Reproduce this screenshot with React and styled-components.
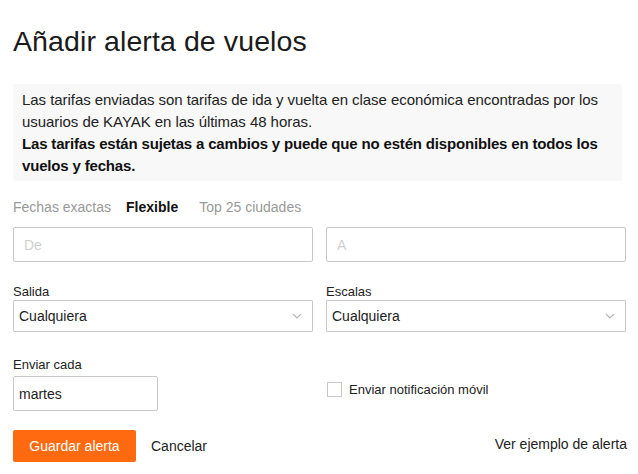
import React, { useState } from "react";
import styled, { createGlobalStyle } from "styled-components";

const GlobalStyle = createGlobalStyle`
  body {
    margin: 0;
    background: #fff;
    font-family: "Liberation Sans", Arial, Helvetica, sans-serif;
    color: #222;
  }
  * {
    box-sizing: border-box;
  }
`;

const Chevron = () => (
  <svg width="10" height="6" viewBox="0 0 10 6">
    <polyline points="1,1 5,5 9,1" fill="none" stroke="#b5b5b5" strokeWidth="1.1" />
  </svg>
);

const App = () => {
  const [tab, setTab] = useState("Flexible");
  const [mobile, setMobile] = useState(false);
  const tabs = ["Fechas exactas", "Flexible", "Top 25 ciudades"];

  return (
    <Container>
      <GlobalStyle />
      <Title>Añadir alerta de vuelos</Title>
      <InfoBox>
        <p>
          Las tarifas enviadas son tarifas de ida y vuelta en clase económica encontradas por los
          <br />
          usuarios de KAYAK en las últimas 48 horas.
        </p>
        <p className="strong">
          Las tarifas están sujetas a cambios y puede que no estén disponibles en todos los
          <br />
          vuelos y fechas.
        </p>
      </InfoBox>
      <Tabs>
        {tabs.map((t) => (
          <Tab key={t} $active={tab === t} onClick={() => setTab(t)}>
            {t}
          </Tab>
        ))}
      </Tabs>
      <Row>
        <TextInput placeholder="De" />
        <TextInput placeholder="A" />
      </Row>
      <Row $top={22}>
        <Field>
          <Label>Salida</Label>
          <SelectBox>
            <span>Cualquiera</span>
            <Chevron />
          </SelectBox>
        </Field>
        <Field>
          <Label>Escalas</Label>
          <SelectBox>
            <span>Cualquiera</span>
            <Chevron />
          </SelectBox>
        </Field>
      </Row>
      <Row $top={25}>
        <Field>
          <Label $gap={3}>Enviar cada</Label>
          <DayInput defaultValue="martes" />
        </Field>
        <CheckRow onClick={() => setMobile((prev) => !prev)}>
          <CheckBox $checked={mobile} />
          <span>Enviar notificación móvil</span>
        </CheckRow>
      </Row>
      <Actions>
        <SaveButton>Guardar alerta</SaveButton>
        <CancelLink>Cancelar</CancelLink>
        <ExampleLink>Ver ejemplo de alerta</ExampleLink>
      </Actions>
    </Container>
  );
};

export default App;

const Container = styled.div`
  width: 638px;
  padding: 24px 13px 0 13px;
`;

const Title = styled.h1`
  margin: 0;
  font-size: 28.5px;
  line-height: 34px;
  font-weight: 400;
  color: #1b1b1b;
  letter-spacing: 0.1px;
`;

const InfoBox = styled.div`
  margin-top: 26px;
  width: 609px;
  background: #f8f8f8;
  border-radius: 2px;
  padding: 5px 9px 4px 9px;

  p {
    margin: 0;
    font-size: 15px;
    line-height: 22px;
    letter-spacing: -0.05px;
    white-space: nowrap;
    color: #222;
  }
  .strong {
    font-weight: 700;
    letter-spacing: -0.17px;
    color: #111;
  }
`;

const Tabs = styled.div`
  display: flex;
  margin-top: 16px;
  height: 20px;
  align-items: center;
`;

const Tab = styled.span`
  font-size: 14px;
  line-height: 20px;
  cursor: pointer;
  color: ${(p) => (p.$active ? "#111" : "#999")};
  font-weight: ${(p) => (p.$active ? 700 : 400)};
  margin-right: ${(p) => (p.$active ? "21px" : "15px")};
`;

const Row = styled.div`
  display: grid;
  grid-template-columns: 300px 300px;
  column-gap: 13px;
  margin-top: ${(p) => (p.$top ? `${p.$top}px` : "10px")};
`;

const TextInput = styled.input`
  height: 35px;
  width: 100%;
  border: 1px solid #c9c9c9;
  border-radius: 2px;
  padding: 0 10px;
  font-family: inherit;
  font-size: 14px;
  color: #222;
  outline: none;

  &::placeholder {
    color: #cfcfcf;
  }
`;

const Field = styled.div`
  display: flex;
  flex-direction: column;
`;

const Label = styled.label`
  font-size: 13px;
  line-height: 16px;
  color: #222;
  margin-bottom: ${(p) => (p.$gap ? `${p.$gap}px` : "0")};
`;

const SelectBox = styled.div`
  height: 32px;
  border: 1px solid #c9c9c9;
  border-radius: 1px;
  display: flex;
  align-items: center;
  justify-content: space-between;
  padding: 0 10px 0 5px;
  font-size: 14px;
  color: #222;
  cursor: pointer;
`;

const DayInput = styled.input`
  width: 145px;
  height: 35px;
  border: 1px solid #c9c9c9;
  border-radius: 2px;
  padding: 0 5px;
  font-family: inherit;
  font-size: 14px;
  color: #222;
  outline: none;
`;

const CheckRow = styled.label`
  align-self: end;
  margin-bottom: 12px;
  margin-left: 1px;
  display: flex;
  align-items: center;
  gap: 7px;
  font-size: 13px;
  color: #222;
  cursor: pointer;
  height: 20px;
`;

const CheckBox = styled.span`
  width: 15px;
  height: 15px;
  border: 1px solid #c9c9c9;
  background: ${(p) => (p.$checked ? "#ff690f" : "#fff")};
`;

const Actions = styled.div`
  display: flex;
  align-items: center;
  margin-top: 19px;
  width: 614px;
`;

const SaveButton = styled.button`
  width: 123px;
  height: 32px;
  border: none;
  border-radius: 2px;
  background: #ff690f;
  color: #fff;
  font-family: inherit;
  font-size: 14px;
  cursor: pointer;
`;

const CancelLink = styled.span`
  margin-left: 15px;
  font-size: 14px;
  color: #222;
  cursor: pointer;
`;

const ExampleLink = styled.span`
  margin-left: auto;
  margin-top: -4px;
  font-size: 14px;
  color: #222;
  cursor: pointer;
`;
